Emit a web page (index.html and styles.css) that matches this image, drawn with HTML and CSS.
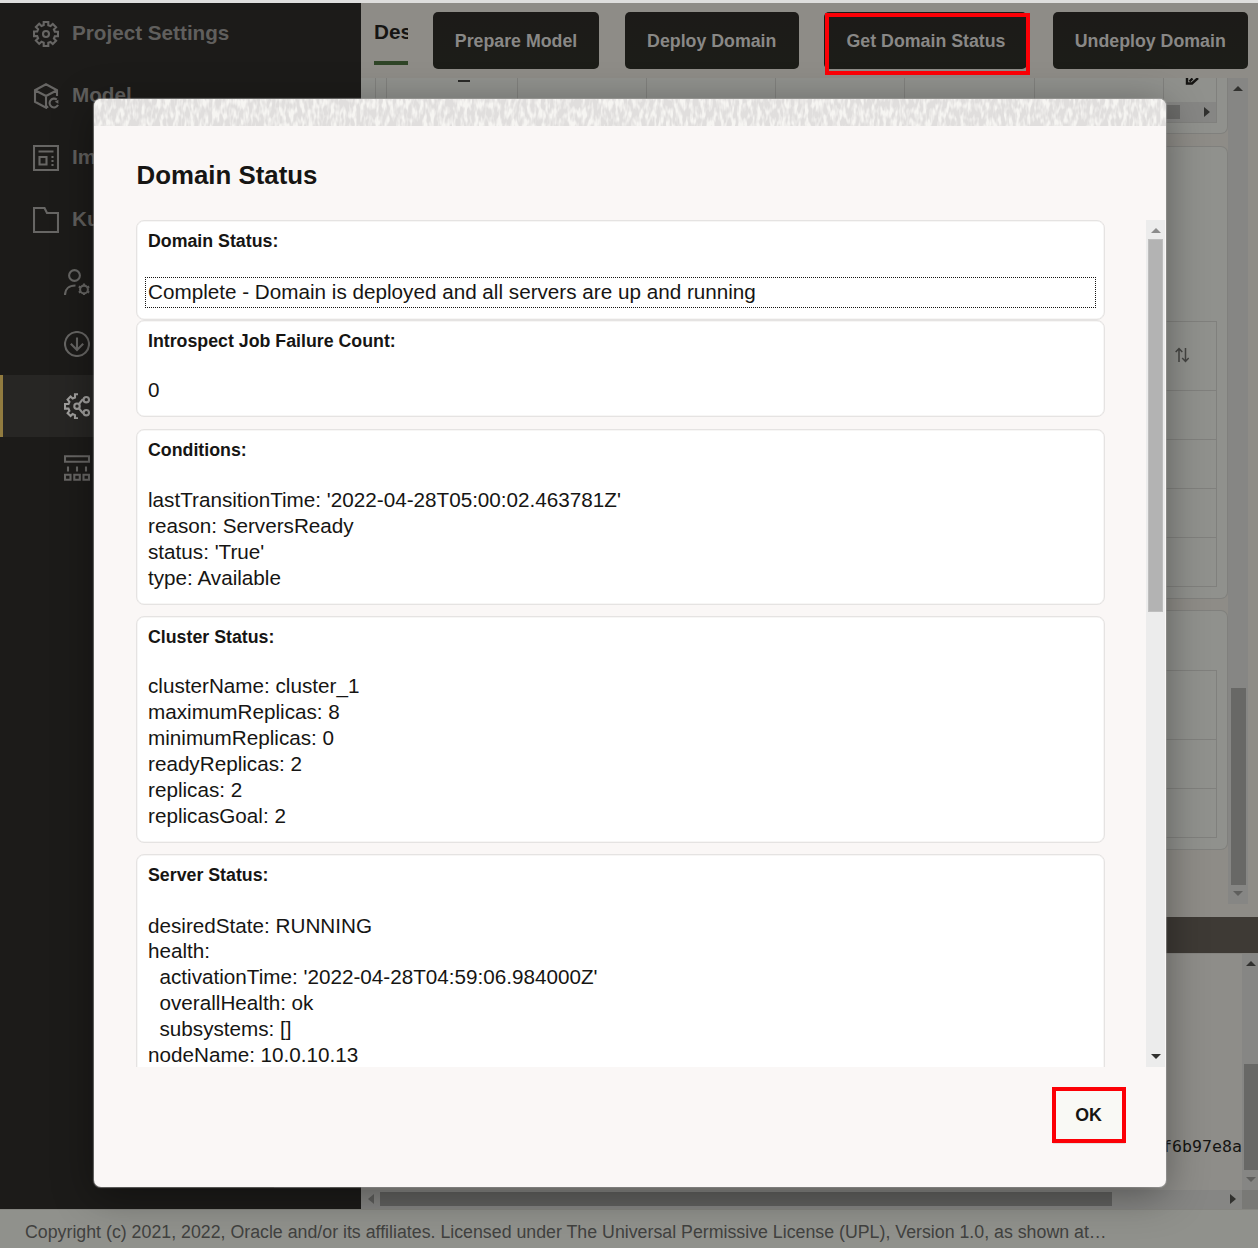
FILE: index.html
```html
<!DOCTYPE html>
<html lang="en">
<head>
<meta charset="utf-8">
<title>Domain Status</title>
<link rel="stylesheet" href="styles.css">
</head>
<body>
<div class="app">
  <div class="workspace">
    <nav class="sidebar">
      <div class="nav-item">
        <svg class="icon" viewBox="0 0 26 26"><path d="M10.7 1h4.6v3.2l2.2.9 2.3-2.2 3.3 3.3-2.2 2.3.9 2.2H25v4.6h-3.2l-.9 2.2 2.2 2.3-3.3 3.3-2.3-2.2-2.2.9V25h-4.6v-3.4l-2.2-.9-2.3 2.2-3.3-3.3 2.2-2.3-.9-2.2H1v-4.6h3.2l.9-2.2-2.2-2.3 3.3-3.3 2.3 2.2 2.2-.9z"/><circle cx="13" cy="13" r="3"/></svg>
        <span>Project Settings</span>
      </div>
      <div class="nav-item">
        <svg class="icon" viewBox="0 0 26 26"><path d="M24 13V7.2L13 1.3 2 7.2v11.6l11 5.9V13L2 7.2M13 13l11-5.8M13 24.7l2.2-1.2M23.8 16.6a4.4 4.4 0 1 0 1.2 5.3"/><path d="M25.4 16.8v4l-3.6-2z" class="solid"/></svg>
        <span>Model</span>
      </div>
      <div class="nav-item">
        <svg class="icon" viewBox="0 0 26 26"><path d="M1 1h24v24H1zM5.5 6.500h15M6.500 12h7v7.500h-7z"/><path d="M19.500 11v10" stroke-dasharray="2 2"/></svg>
        <span>Image</span>
      </div>
      <div class="nav-item">
        <svg class="icon" viewBox="0 0 26 26"><path d="M1 1h10.500l2.500 5h11v19H1z"/></svg>
        <span>Kubernetes</span>
      </div>
      <div class="nav-item sub">
        <svg class="icon" viewBox="0 0 26 26"><circle cx="10.5" cy="6.5" r="5.4"/><path d="M1 26c0-6 4-9.500 10.500-9.500"/><circle cx="20" cy="20.5" r="3.9"/><path d="M20 14.500v2.500M20 24v2.500M14.800 17.500l2.100 1.200M23.100 22.300l2.100 1.200M25.200 17.500l-2.100 1.200M16.900 22.300l-2.100 1.200"/></svg>
      </div>
      <div class="nav-item sub">
        <svg class="icon" viewBox="0 0 26 26"><circle cx="13" cy="13" r="12"/><path d="M13 6.500v12M6.800 12.800l6.200 6.200 6.200-6.200"/></svg>
      </div>
      <div class="nav-item sub active">
        <svg class="icon" viewBox="0 0 26 26"><path d="M14 1.300h-3v3.200l-2.400 1-2-2-3 3 1.800 2.300-.9 2.200H1v4.600h3.500l.9 2.200-1.800 2.300 3 3 2-2 2.400 1v3.200h3M15 11l3.300-4.200h1.500M15 15.500l3.500 4.200h1.300"/><circle cx="13" cy="13.2" r="2.7"/><circle cx="22.3" cy="6.7" r="2.7"/><circle cx="22.3" cy="19.7" r="2.7"/></svg>
      </div>
      <div class="nav-item sub">
        <svg class="icon" viewBox="0 0 26 26"><path d="M1 1.300h24v5.400H1zM4 11.500v5M13 11.500v5M22 11.500v5M1 19.800h5.500v5H1zM10.300 19.800h5.500v5h-5.500zM19.500 19.800H25v5h-5.500z"/></svg>
      </div>
      <div class="nav-handle"></div>
    </nav>

    <main class="main">
      <header class="toolbar">
        <div class="tab">Des</div>
        <button class="action prepare">Prepare Model</button>
        <button class="action deploy">Deploy Domain</button>
        <button class="action status">Get Domain Status<i class="highlight"></i></button>
        <button class="action undeploy">Undeploy Domain</button>
      </header>

      <div class="viewport">
        <div class="panels">
          <section class="panel first">
            <div class="grid-row">
              <div class="cell lead"></div><div class="cell name"><div class="dash"></div></div><div class="cell"></div><div class="cell"></div><div class="cell"></div><div class="cell"></div><div class="cell"></div>
              <div class="cell edit"><svg width="16" height="8" viewBox="0 0 16 8"><path d="M2 0v5.500h5L13 0M4.500 3.500l3-3" fill="none" stroke="#161513" stroke-width="2.4"/></svg></div>
            </div>
            <div class="hscroll"><div class="thumb"></div><svg class="arrow" viewBox="0 0 6 10"><path d="M0 0l6 5-6 5z"/></svg></div>
          </section>
          <section class="panel second">
            <div class="table">
              <div class="head"><svg class="sort" viewBox="0 0 14 16"><path d="M4 15V2M.7 5L4 1.500 7.300 5M10.500 1v13M7.200 11l3.300 3.500 3.200-3.500"/></svg></div>
              <div class="row"></div><div class="row"></div><div class="row"></div><div class="row"></div>
            </div>
          </section>
          <section class="panel third">
            <div class="table"><div class="head"></div><div class="row"></div><div class="row"></div></div>
          </section>
        </div>
        <div class="vscroll">
          <svg class="arrow" viewBox="0 0 10 5"><path d="M0 5l5-5 5 5z"/></svg>
          <div class="thumb"></div>
          <svg class="arrow dim" viewBox="0 0 10 5"><path d="M0 0h10L5 5z"/></svg>
        </div>
      </div>

      <div class="console-bar"></div>
      <div class="console">
        <div class="log">f6b97e8a</div>
        <div class="log-vscroll">
          <svg class="arrow" viewBox="0 0 10 5"><path d="M0 5l5-5 5 5z"/></svg>
          <div class="thumb"></div>
          <svg class="arrow dim" viewBox="0 0 10 5"><path d="M0 0h10L5 5z"/></svg>
        </div>
        <div class="log-hscroll">
          <svg class="arrow dim" viewBox="0 0 6 10"><path d="M6 0L0 5l6 5z"/></svg>
          <div class="thumb"></div>
          <svg class="arrow" viewBox="0 0 6 10"><path d="M0 0l6 5-6 5z"/></svg>
        </div>
        <div class="corner"></div>
      </div>
    </main>
  </div>
  <footer class="footer"><span>Copyright (c) 2021, 2022, Oracle and/or its affiliates. Licensed under The Universal Permissive License (UPL), Version 1.0, as shown at…</span></footer>
</div>

<div class="dialog" role="dialog">
  <svg class="texture" width="1072" height="28">
    <filter id="grain" x="0" y="0" width="100%" height="100%" color-interpolation-filters="sRGB">
      <feTurbulence type="fractalNoise" baseFrequency="0.27 0.1" numOctaves="2" seed="8"/>
      <feColorMatrix values="0 0 0 0 .965  0 0 0 0 .96  0 0 0 0 .95  3.5 0 0 0 -1.4"/>
    </filter>
    <rect width="1072" height="28" fill="#e0dedd"/>
    <rect width="1072" height="28" filter="url(#grain)"/>
  </svg>
  <h1 class="title">Domain Status</h1>
  <div class="body">
    <div class="cards">
      <section class="card"><h2>Domain Status:</h2><pre class="focused">Complete - Domain is deployed and all servers are up and running</pre></section>
      <section class="card count"><h2>Introspect Job Failure Count:</h2><pre>0</pre></section>
      <section class="card conditions"><h2>Conditions:</h2><pre>lastTransitionTime: '2022-04-28T05:00:02.463781Z'
reason: ServersReady
status: 'True'
type: Available</pre></section>
      <section class="card cluster"><h2>Cluster Status:</h2><pre>clusterName: cluster_1
maximumReplicas: 8
minimumReplicas: 0
readyReplicas: 2
replicas: 2
replicasGoal: 2</pre></section>
      <section class="card server"><h2>Server Status:</h2><pre>desiredState: RUNNING
health:
  activationTime: '2022-04-28T04:59:06.984000Z'
  overallHealth: ok
  subsystems: []
nodeName: 10.0.10.13</pre></section>
    </div>
    <div class="body-scroll">
      <svg class="arrow dim" viewBox="0 0 10 5"><path d="M0 5l5-5 5 5z"/></svg>
      <div class="thumb"></div>
      <svg class="arrow" viewBox="0 0 10 5"><path d="M0 0h10L5 5z"/></svg>
    </div>
  </div>
  <div class="actions"><button class="ok">OK</button></div>
</div>
</body>
</html>
```
FILE: styles.css
```css
* { box-sizing: border-box; }
body { margin: 0; width: 1258px; height: 1248px; overflow: hidden; position: relative; background: #8e8c87; font-family: "Liberation Sans", Arial, sans-serif; color: #161513; }
button { font: inherit; padding: 0; border: 0; }
.app { display: flex; flex-direction: column; height: 1248px; border-top: 3px solid #dededd; }
.workspace { display: flex; height: 1206px; }

/* Sidebar */
.sidebar { width: 361px; background: #1c1b19; display: flex; flex-direction: column; }
.nav-item { height: 62px; padding-left: 33px; display: flex; align-items: center; gap: 13px; color: #605f5d; font-size: 20.68px; font-weight: 700; flex: none; }
.nav-item span { margin-top: -2px; }
.icon { width: 26px; height: 26px; fill: none; stroke: #676664; stroke-width: 2.1; flex: none; }
.icon .solid { fill: #676664; stroke: none; }
.sub { padding-left: 64px; }
.active { background: #272624; border-left: 3px solid #917b3f; padding-left: 61px; }
.active .icon { stroke: #a09f9d; }
.nav-handle { width: 56px; height: 2px; background: #343331; margin: auto 31px 21px auto; }

/* Toolbar */
.main { width: 897px; display: flex; flex-direction: column; }
.toolbar { height: 75px; padding: 9px 0 0 13px; display: flex; align-items: flex-start; }
.tab { width: 34px; height: 53px; overflow: hidden; white-space: nowrap; border-bottom: 4px solid #2f4527; font-size: 20.68px; font-weight: 700; line-height: 40px; margin-right: 25px; }
.action { height: 57px; border-radius: 5px; background: linear-gradient(#1c1a18, #1c1d18); color: #898886; font-size: 17.77px; font-weight: 700; white-space: nowrap; padding-top: 1px; }
.prepare { width: 166px; margin-right: 26px; }
.deploy { width: 173.5px; margin-right: 25.5px; }
.status { width: 203px; margin-right: 25.5px; position: relative; padding-left: 1px; }
.undeploy { width: 195.5px; }
.highlight { position: absolute; left: 1px; top: 1px; width: 205px; height: 62px; border: 4px solid #fc0006; }

/* Main panels */
.viewport { height: 826px; display: flex; }
.panels { width: 867px; }
.panel { border: 1px solid #80807d; border-left: 0; border-radius: 0 7px 7px 0; background: #90918d; padding-right: 10px; }
.first { height: 56px; border-top: 0; border-radius: 0 0 7px 0; margin-bottom: 12px; }
.grid-row { height: 24px; margin-left: 14px; display: flex; border-left: 1px solid #80807d; border-right: 1px solid #80807d; }
.cell { width: 129.3px; border-right: 1px solid #80807d; flex: none; }
.lead { width: 11px; }
.name { width: 130.5px; padding: 2px 0 0 71px; }
.dash { width: 12px; height: 2px; background: #2a2a28; }
.edit { width: 52px; border: 0; padding-left: 21px; line-height: 0; }
.hscroll { height: 21px; margin-left: 14px; background: #868684; border: 1px solid #80807d; border-top: 0; display: flex; align-items: center; justify-content: space-between; padding-right: 6px; }
.hscroll .thumb { width: 804px; height: 14px; background: #6b6b69; }
.arrow { width: 10px; height: 5px; fill: #31312f; flex: none; }
.arrow.dim { fill: #5f5f5d; }
.hscroll .arrow, .log-hscroll .arrow { width: 6px; height: 10px; }
.second { height: 453px; padding-top: 174px; margin-bottom: 11px; }
.third { height: 240px; padding-top: 59px; }
.table { border: 1px solid #80807d; border-left: 0; }
.head { height: 68px; display: flex; justify-content: flex-end; align-items: center; padding: 0 27px 2px 0; }
.sort { width: 14px; height: 16px; fill: none; stroke: #444442; stroke-width: 1.5; }
.row { height: 49px; border-top: 1px solid #80807d; }
.vscroll { width: 20px; background: #868684; display: flex; flex-direction: column; align-items: center; padding: 8px 0; }
.vscroll .thumb { width: 15px; height: 197px; margin: auto 0 6px; background: #686866; }

/* Console */
.console-bar { height: 36px; margin-top: 13px; background: #3e3a35; }
.console { height: 256px; display: grid; grid-template: 236px 19px / 881px 16px; background: #8e8d89; border-top: 1px solid #858480; }
.log { text-align: right; font: 16.6px/20px "DejaVu Sans Mono", monospace; padding-top: 183px; }
.log-vscroll { background: #868684; display: flex; flex-direction: column; align-items: flex-end; padding: 7px 2px 8px 0; }
.log-vscroll .thumb { width: 14px; height: 106px; margin: auto -2px 7px; background: #686866; }
.log-hscroll { background: #868684; display: flex; align-items: center; padding: 0 6px 2px 7px; }
.log-hscroll .thumb { width: 732px; height: 14px; margin: 0 auto 0 6px; background: #626260; }
.corner { background: #797976; }

.footer { height: 39px; background: #90918c; border-top: 1px solid #858580; color: #41413f; font-size: 17.77px; line-height: 45px; padding-left: 25px; white-space: nowrap; }

/* Dialog */
.dialog { position: absolute; left: 94px; top: 99px; width: 1072px; height: 1088px; border-radius: 7px; overflow: hidden; background: #faf7f6; display: flex; flex-direction: column; box-shadow: 0 8px 40px rgba(0,0,0,.38), 0 0 1px 1px rgba(190,190,188,.6); }
.texture { display: block; flex: none; height: 27px; }
.title { margin: 33px 0 29px 42.5px; font-size: 25.85px; line-height: 32px; }
.body { height: 847px; display: flex; justify-content: space-between; padding: 0 1px 0 42px; overflow: hidden; flex: none; }
.cards { width: 969px; height: 847px; overflow: hidden; }
.card { height: 99.5px; border: 1px solid #e5e3e2; box-shadow: inset 0 0 0 .5px #efedec; border-radius: 8px; background: #fff; padding-left: 11px; }
.card h2 { margin: 0; padding-top: 1px; font-size: 17.77px; line-height: 39px; height: 40px; }
.card pre { margin: 16.3px 0 0; font: 20.68px/25.85px "Liberation Sans", Arial, sans-serif; }
.card .focused { margin: 16px 8px 0 -3px; height: 31px; padding: 1px 0 0 2px; border: 1px dotted #161513; }
.count { height: 97.5px; margin-bottom: 11.5px; }
.conditions { height: 176px; margin-bottom: 11.5px; }
.conditions pre { margin-top: 17.5px; }
.cluster { height: 227px; margin-bottom: 11px; }
.server { height: 300px; }
.server pre { margin-top: 17.5px; }
.body-scroll { width: 19px; background: #ececec; display: flex; flex-direction: column; align-items: center; padding: 8px 0; }
.body-scroll .arrow.dim { fill: #8c8c8c; }
.body-scroll .thumb { width: 15px; height: 373px; margin: 6px 0 auto; background: #b3b3b3; border: 1px solid #bebebe; }
.actions { display: flex; justify-content: flex-end; padding: 20px 40px 0 0; }
.ok { width: 74px; height: 56px; border: 4px solid #fc0006; background: #f9f9f5; font-size: 17.77px; font-weight: 700; color: #161513; padding-right: 1px; box-shadow: 0 1px 1px -1px #777; }
```
